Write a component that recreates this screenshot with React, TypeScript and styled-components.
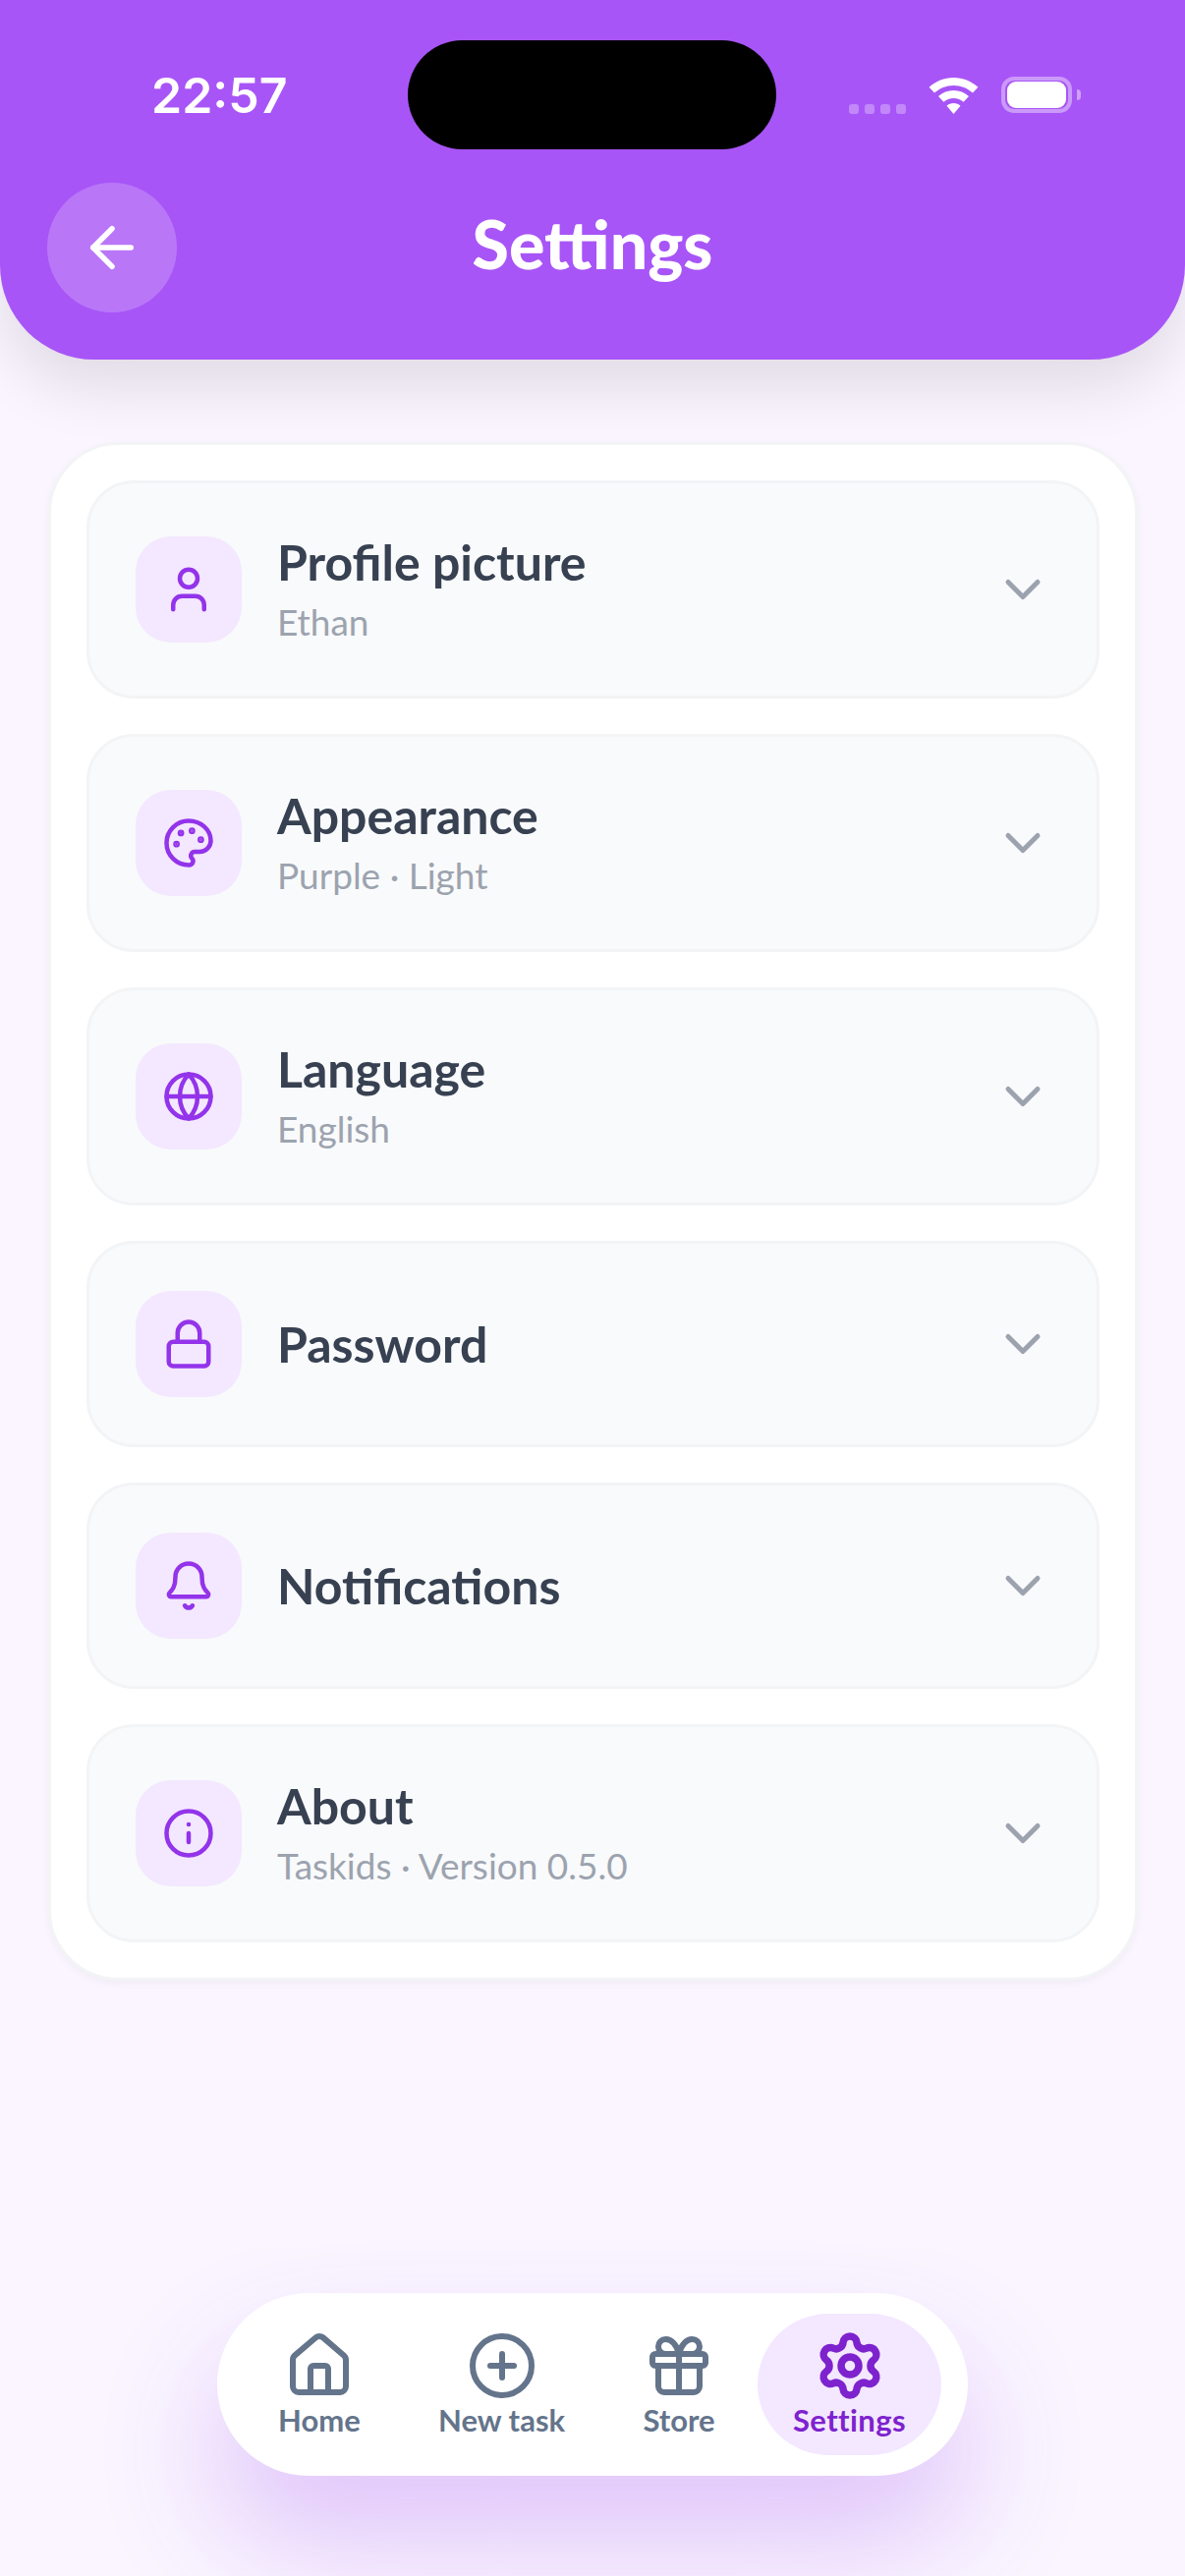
import type { ReactNode } from 'react'
import styled, { createGlobalStyle } from 'styled-components'
import {
  ArrowLeft,
  Bell,
  ChevronDown,
  CirclePlus,
  Gift,
  Globe,
  House,
  Info,
  Lock,
  Palette,
  Settings,
  User,
} from 'lucide-react'

const GlobalStyle = createGlobalStyle`
  html, body {
    margin: 0;
    padding: 0;
    background: #faf5ff;
  }
  * { box-sizing: border-box; }
`

const Page = styled.div`
  width: 1206px;
  height: 2622px;
  overflow: hidden;
  display: flex;
  flex-direction: column;
  background: #faf5ff;
  font-family: Lato, "Noto Sans", sans-serif;
`

const Header = styled.header`
  height: 366px;
  flex-shrink: 0;
  padding: 41px 48px 0;
  background: #a855f7;
  border-radius: 0 0 96px 96px;
  box-shadow: 0 30px 60px rgba(0, 0, 0, 0.1);
`

const StatusBar = styled.div`
  display: grid;
  grid-template-columns: 367px 375px 1fr;
  align-items: center;
  height: 111px;
`

const Time = styled.span`
  padding-left: 106px;
  font-family: Inter, sans-serif;
  font-size: 50px;
  font-weight: 600;
  color: #fff;
`

const Island = styled.div`
  height: 111px;
  border-radius: 56px;
  background: #000;
`

const StatusIcons = styled.div`
  display: flex;
  align-items: flex-end;
  justify-content: flex-end;
  height: 39px;
  margin-right: 58px;
`

const SignalDots = styled.div`
  display: flex;
  gap: 6px;
  margin-right: 23px;
`

const SignalDot = styled.span`
  width: 10px;
  height: 10px;
  border-radius: 3px;
  background: rgba(255, 255, 255, 0.3);
`

const Battery = styled.div`
  position: relative;
  width: 74px;
  height: 39px;
  margin-left: 22px;
  margin-right: 8px;
  padding: 5px 6px;
  border: 1px solid transparent;
  border-radius: 14px;
  box-shadow: inset 0 0 0 4px rgba(255, 255, 255, 0.4);

  &::after {
    content: '';
    position: absolute;
    top: 13px;
    right: -9px;
    width: 4px;
    height: 11px;
    border-radius: 0 4px 4px 0;
    background: rgba(255, 255, 255, 0.45);
  }
`

const BatteryFill = styled.div`
  width: 100%;
  height: 100%;
  border-radius: 9px;
  background: #fff;
`

const TitleRow = styled.div`
  display: grid;
  grid-template-columns: 132px 1fr 132px;
  align-items: center;
  margin-top: 34px;
`

const BackButton = styled.button`
  width: 132px;
  height: 132px;
  padding: 0;
  border: none;
  border-radius: 50%;
  display: flex;
  align-items: center;
  justify-content: center;
  color: #fff;
  background: rgba(255, 255, 255, 0.2);
`

const Title = styled.h1`
  margin: 0 0 9px;
  text-align: center;
  font-size: 68px;
  font-weight: 900;
  color: #fff;
`

const Card = styled.section`
  margin: 84px 48px 0 49px;
  padding: 36px;
  display: flex;
  flex-direction: column;
  gap: 36px;
  background: #fff;
  border: 3px solid #f3f4f6;
  border-radius: 72px;
  box-shadow: 0 3px 9px rgba(0, 0, 0, 0.04);
`

const Row = styled.div`
  display: flex;
  align-items: center;
  gap: 36px;
  min-height: 210px;
  padding: 47px 45px 47px 47px;
  background: #f9fafb;
  border: 3px solid #f3f4f6;
  border-radius: 48px;
`

const IconBox = styled.div`
  flex-shrink: 0;
  width: 108px;
  height: 108px;
  border-radius: 36px;
  display: flex;
  align-items: center;
  justify-content: center;
  color: #9333ea;
  background: #f3e8ff;
`

const RowText = styled.div`
  flex: 1;
  min-width: 0;
`

const RowTitle = styled.div`
  font-size: 50px;
  line-height: 66px;
  font-weight: 700;
  color: #374151;
`

const RowSub = styled.div`
  font-size: 37px;
  line-height: 56px;
  font-weight: 400;
  color: #9ca3af;
`

const Chevron = styled.div`
  flex-shrink: 0;
  display: flex;
  color: #9ca3af;
`

const NavWrap = styled.div`
  margin-top: auto;
  padding-bottom: 102px;
  display: flex;
  justify-content: center;
`

const Nav = styled.nav`
  width: 764px;
  height: 186px;
  padding: 21px 27px 21px 26px;
  display: flex;
  align-items: center;
  justify-content: space-between;
  background: #fff;
  border-radius: 93px;
  box-shadow: 0 66px 120px rgba(147, 51, 234, 0.25);
`

const NavItem = styled.div<{ $active?: boolean }>`
  height: 144px;
  padding: 0 36px;
  border-radius: 72px;
  display: flex;
  flex-direction: column;
  align-items: center;
  justify-content: center;
  color: ${p => (p.$active ? '#7e22ce' : '#64748b')};
  background: ${p => (p.$active ? '#f3e8ff' : 'transparent')};
`

const NavLabel = styled.span<{ $active?: boolean }>`
  font-size: 31px;
  line-height: 38px;
  font-weight: 700;
  letter-spacing: ${p => (p.$active ? '0.4px' : '0')};
  white-space: nowrap;
`

const ICON_STROKE = 2

type RowData = { icon: ReactNode; title: string; sub?: string }

const rows: RowData[] = [
  { icon: <User size={54} strokeWidth={ICON_STROKE} />, title: 'Profile picture', sub: 'Ethan' },
  { icon: <Palette size={54} strokeWidth={ICON_STROKE} />, title: 'Appearance', sub: 'Purple · Light' },
  { icon: <Globe size={54} strokeWidth={ICON_STROKE} />, title: 'Language', sub: 'English' },
  { icon: <Lock size={54} strokeWidth={ICON_STROKE} />, title: 'Password' },
  { icon: <Bell size={54} strokeWidth={ICON_STROKE} />, title: 'Notifications' },
  { icon: <Info size={54} strokeWidth={ICON_STROKE} />, title: 'About', sub: 'Taskids · Version 0.5.0' },
]

function Wifi() {
  return (
    <svg width="51" height="37" viewBox="0 0 51 37" fill="#fff">
      <path d="M25.5 0C16 0 7.4 3.6 0.6 9.8l5.4 5.800C11.300 10.800 18 8 25.500 8s14.200 2.800 19.500 7.600l5.400-5.800C43.600 3.600 35 0 25.500 0z" />
      <path d="M25.500 13c-6 0-11.300 2.200-15.500 6l5.400 5.800c2.700-2.400 6.200-3.800 10.100-3.800s7.400 1.400 10.100 3.800l5.400-5.800c-4.200-3.800-9.500-6-15.500-6z" />
      <path d="M25.500 26c-2.700 0-5.200 1-7 2.700l7 8.300 7-8.300c-1.800-1.700-4.300-2.700-7-2.700z" />
    </svg>
  )
}

export default function App() {
  return (
    <Page>
      <GlobalStyle />
      <Header>
        <StatusBar>
          <Time>22:57</Time>
          <Island />
          <StatusIcons>
            <SignalDots>
              <SignalDot />
              <SignalDot />
              <SignalDot />
              <SignalDot />
            </SignalDots>
            <Wifi />
            <Battery>
              <BatteryFill />
            </Battery>
          </StatusIcons>
        </StatusBar>
        <TitleRow>
          <BackButton>
            <ArrowLeft size={66} strokeWidth={2} />
          </BackButton>
          <Title>Settings</Title>
        </TitleRow>
      </Header>

      <Card>
        {rows.map(row => (
          <Row key={row.title}>
            <IconBox>{row.icon}</IconBox>
            <RowText>
              <RowTitle>{row.title}</RowTitle>
              {row.sub && <RowSub>{row.sub}</RowSub>}
            </RowText>
            <Chevron>
              <ChevronDown size={60} strokeWidth={2} />
            </Chevron>
          </Row>
        ))}
      </Card>

      <NavWrap>
        <Nav>
          <NavItem>
            <House size={72} strokeWidth={2} />
            <NavLabel>Home</NavLabel>
          </NavItem>
          <NavItem>
            <CirclePlus size={72} strokeWidth={2} />
            <NavLabel>New task</NavLabel>
          </NavItem>
          <NavItem>
            <Gift size={72} strokeWidth={2} />
            <NavLabel>Store</NavLabel>
          </NavItem>
          <NavItem $active>
            <Settings size={72} strokeWidth={2.5} />
            <NavLabel $active>Settings</NavLabel>
          </NavItem>
        </Nav>
      </NavWrap>
    </Page>
  )
}
